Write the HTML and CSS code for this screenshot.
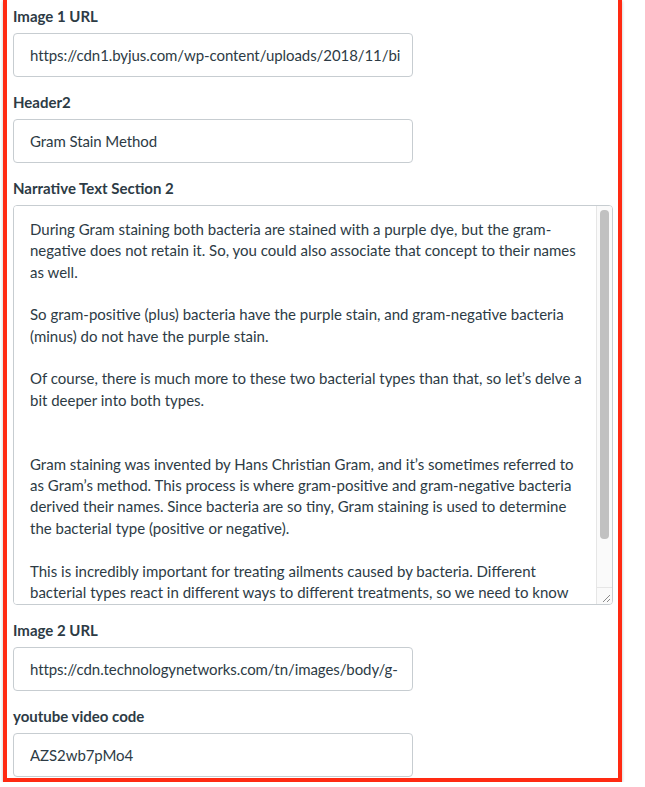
FILE: index.html
```html
<!DOCTYPE html>
<html lang="en">
<head>
<meta charset="utf-8">
<title>Form</title>
<link rel="stylesheet" href="styles.css">
</head>
<body>
<div class="panel">
  <div class="field">
    <label class="label">Image 1 URL</label>
    <input class="input" type="text" value="https://cdn1.byjus.com/wp-content/uploads/2018/11/bi">
  </div>
  <div class="field">
    <label class="label">Header2</label>
    <input class="input" type="text" value="Gram Stain Method">
  </div>
  <div class="field">
    <label class="label">Narrative Text Section 2</label>
    <div class="textbox">
      <textarea class="textarea">During Gram staining both bacteria are stained with a purple dye, but the gram-negative does not retain it. So, you could also associate that concept to their names as well.

So gram-positive (plus) bacteria have the purple stain, and gram-negative bacteria (minus) do not have the purple stain.

Of course, there is much more to these two bacterial types than that, so let’s delve a bit deeper into both types.


Gram staining was invented by Hans Christian Gram, and it’s sometimes referred to as Gram’s method. This process is where gram-positive and gram-negative bacteria derived their names. Since bacteria are so tiny, Gram staining is used to determine the bacterial type (positive or negative).

This is incredibly important for treating ailments caused by bacteria. Different bacterial types react in different ways to different treatments, so we need to know which type we are dealing with before choosing an antibiotic.</textarea>
      <div class="scrollbar">
        <div class="track"><div class="thumb"></div></div>
        <div class="corner">
          <svg width="15" height="15" viewBox="0 0 15 15"><path d="M13 6 L6 13 M13 10 L10 13" stroke="#8a8a8a" stroke-width="1" fill="none"/></svg>
        </div>
      </div>
    </div>
  </div>
  <div class="field">
    <label class="label">Image 2 URL</label>
    <input class="input" type="text" value="https://cdn.technologynetworks.com/tn/images/body/g-">
  </div>
  <div class="field">
    <label class="label">youtube video code</label>
    <input class="input" type="text" value="AZS2wb7pMo4">
  </div>
</div>
</body>
</html>
```

FILE: styles.css
```css
html, body {
  margin: 0;
  padding: 0;
  background: #ffffff;
}

body {
  font-family: Lato, "Open Sans", sans-serif;
  color: #2d3b45;
}

.panel {
  margin-left: 3px;
  width: 600px;
  border: 4px solid #ff2a12;
  border-top: none;
  padding: 6px 5px 1px 6px;
  box-shadow: 0 1px 3px rgba(0, 0, 0, 0.25);
  display: flex;
  flex-direction: column;
  gap: 15px;
}

.field {
  display: flex;
  flex-direction: column;
  align-items: flex-start;
}

.label {
  font-size: 15px;
  font-weight: 700;
  line-height: 20px;
  margin-bottom: 7px;
  color: #2d3b45;
}

.input {
  box-sizing: border-box;
  width: 400px;
  height: 44px;
  margin: 0;
  padding: 0 8px 0 16px;
  border: 1px solid #c7cdd1;
  border-radius: 4px;
  font-family: Lato, "Open Sans", sans-serif;
  font-size: 15px;
  letter-spacing: -0.08px;
  color: #2d3b45;
  background: #ffffff;
  outline: none;
}

.textbox {
  box-sizing: border-box;
  width: 600px;
  height: 400px;
  border: 1px solid #c7cdd1;
  border-radius: 4px;
  display: flex;
  overflow: hidden;
  background: #ffffff;
}

.textarea {
  flex: 1;
  box-sizing: border-box;
  height: 100%;
  margin: 0;
  padding: 13px 12px 11px 16px;
  border: none;
  font-family: Lato, "Open Sans", sans-serif;
  font-size: 15px;
  line-height: 21.35px;
  color: #2d3b45;
  background: #ffffff;
  overflow: hidden;
  resize: none;
  outline: none;
}

.scrollbar {
  width: 16px;
  display: flex;
  flex-direction: column;
  background: #fafafa;
  border-left: 1px solid #e6e6e6;
  box-sizing: border-box;
}

.track {
  flex: 1;
  padding: 4px 3px 0 3px;
}

.thumb {
  height: 329px;
  background: #c1c1c1;
  border-radius: 4px;
}

.corner {
  height: 16px;
  border-top: 1px solid #e6e6e6;
  display: flex;
  align-items: flex-end;
  justify-content: flex-end;
}

.corner svg {
  display: block;
}
```
